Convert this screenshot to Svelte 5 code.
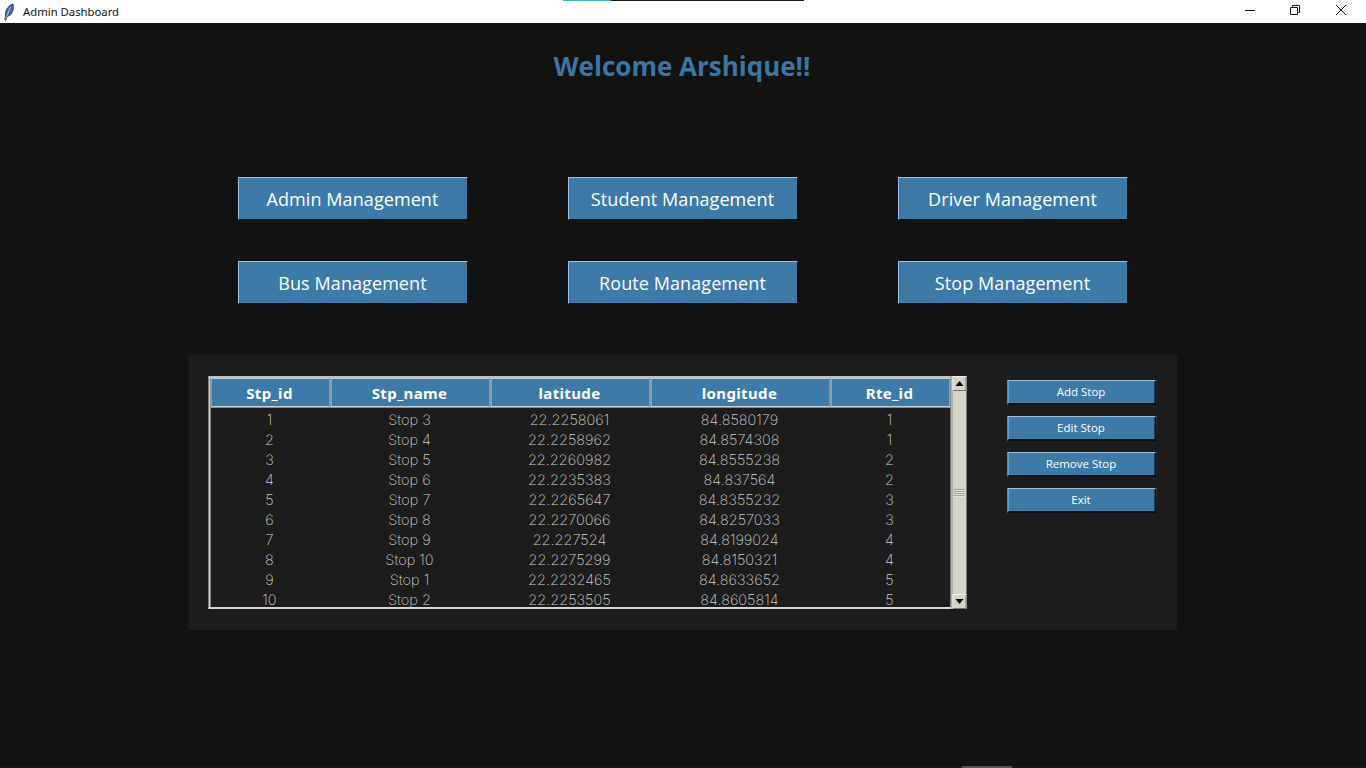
<script>
  const modules = [
    'Admin Management',
    'Student Management',
    'Driver Management',
    'Bus Management',
    'Route Management',
    'Stop Management'
  ];

  const columns = ['Stp_id', 'Stp_name', 'latitude', 'longitude', 'Rte_id'];

  const stops = [
    [1, 'Stop 3', '22.2258061', '84.8580179', 1],
    [2, 'Stop 4', '22.2258962', '84.8574308', 1],
    [3, 'Stop 5', '22.2260982', '84.8555238', 2],
    [4, 'Stop 6', '22.2235383', '84.837564', 2],
    [5, 'Stop 7', '22.2265647', '84.8355232', 3],
    [6, 'Stop 8', '22.2270066', '84.8257033', 3],
    [7, 'Stop 9', '22.227524', '84.8199024', 4],
    [8, 'Stop 10', '22.2275299', '84.8150321', 4],
    [9, 'Stop 1', '22.2232465', '84.8633652', 5],
    [10, 'Stop 2', '22.2253505', '84.8605814', 5]
  ];

  const actions = ['Add Stop', 'Edit Stop', 'Remove Stop', 'Exit'];
</script>

<div class="window">
  <header class="titlebar">
    <svg class="feather" width="12" height="18" viewBox="0 0 12 18" aria-hidden="true">
      <path d="M2 17 L2.5 11 C3 6 6 2 10 1 C11 5 10 10 7 12 L4 14 L3 17 Z" fill="#4a6a9c" stroke="#1f2a44" stroke-width="0.8" />
      <path d="M2.6 16 L7.5 4" stroke="#c8d4e8" stroke-width="0.8" fill="none" />
    </svg>
    <span class="window-title">Admin Dashboard</span>
    <div class="window-controls">
      <svg width="46" height="23" viewBox="0 0 46 23" aria-hidden="true">
        <path d="M19 10.5 H29" stroke="#111" fill="none" />
      </svg>
      <svg width="46" height="23" viewBox="0 0 46 23" aria-hidden="true">
        <path d="M18.5 7.5 H25.5 V14.5 H18.5 Z M20.5 7.5 V5.5 H27.5 V12.5 H25.5" stroke="#111" fill="none" />
      </svg>
      <svg width="46" height="23" viewBox="0 0 46 23" aria-hidden="true">
        <path d="M18 5 L28 15 M28 5 L18 15" stroke="#111" fill="none" />
      </svg>
    </div>
  </header>

  <main class="content">
    <h1>Welcome Arshique!!</h1>

    <nav class="modules">
      {#each modules as label}
        <button class="raised module">{label}</button>
      {/each}
    </nav>

    <section class="panel">
      <div class="table-wrap">
        <div class="table-frame">
          <div class="head">
            {#each columns as col}
              <div class="head-cell">{col}</div>
            {/each}
          </div>
          <div class="rows">
            {#each stops as row}
              <div class="row">
                {#each row as value}
                  <div>{value}</div>
                {/each}
              </div>
            {/each}
          </div>
        </div>
        <div class="scrollbar">
          <div class="arrow"><span class="tri up"></span></div>
          <div class="track">
            <div class="grip"></div>
          </div>
          <div class="arrow"><span class="tri down"></span></div>
        </div>
      </div>

      <div class="actions">
        {#each actions as label}
          <button class="raised action">{label}</button>
        {/each}
      </div>
    </section>
  </main>

  <div class="taskbar-top"></div>
  <div class="taskbar-bottom"></div>
</div>

<style>
  :global(body) {
    margin: 0;
    background: #121212;
  }

  .window {
    width: 1366px;
    height: 768px;
    overflow: hidden;
    position: relative;
    display: flex;
    flex-direction: column;
    background: #121212;
    font-family: "Open Sans", "Noto Sans", sans-serif;
  }

  .titlebar {
    height: 23px;
    flex: none;
    display: flex;
    align-items: center;
    background: #fff;
    color: #111;
    font-family: "Noto Sans", sans-serif;
    font-size: 11.3px;
  }

  .feather {
    margin: 0 8px 0 3px;
  }

  .window-controls {
    display: flex;
    margin-left: auto;
    margin-right: 2px;
  }

  .window-controls svg {
    display: block;
  }

  .content {
    flex: 1;
    display: flex;
    flex-direction: column;
    align-items: center;
  }

  h1 {
    margin: 23px 0 0;
    height: 40px;
    line-height: 40px;
    font-size: 26px;
    font-weight: 700;
    color: #3877a6;
    white-space: nowrap;
    transform: translateX(-1px);
  }

  .modules {
    margin-top: 91px;
    display: grid;
    grid-template-columns: repeat(3, 230px);
    grid-auto-rows: 43px;
    column-gap: 100px;
    row-gap: 41px;
  }

  .raised {
    box-sizing: border-box;
    margin: 0;
    padding: 0;
    background: #3d7aa8;
    color: #fff;
    font-family: "Open Sans", "Noto Sans", sans-serif;
    border: 1px solid;
    border-color: #9cc0de #0a0f14 #0a0f14 #9cc0de;
    border-radius: 0;
  }

  .module {
    font-size: 18px;
    letter-spacing: 0.08px;
    padding-right: 1px;
  }

  .panel {
    box-sizing: border-box;
    width: 989px;
    height: 275px;
    margin-top: 51px;
    transform: translateX(-0.5px);
    padding: 21px 20px;
    display: flex;
    align-items: flex-start;
    background: #1c1c1c;
  }

  .table-wrap {
    display: flex;
    height: 233px;
  }

  .table-frame {
    box-sizing: border-box;
    width: 744px;
    height: 233px;
    border: 2px solid;
    border-color: #c0c0bc #d8d8d0 #d8d8d0 #d8d8d0;
    overflow: hidden;
    background: #1c1c1c;
  }

  .head,
  .row {
    display: grid;
    grid-template-columns: 120px 160px 160px 180px 120px;
  }

  .head {
    height: 29px;
    border-bottom: 1px solid #999;
    box-sizing: content-box;
  }

  .head-cell {
    box-sizing: border-box;
    height: 29px;
    display: flex;
    align-items: center;
    justify-content: center;
    padding-right: 1px;
    background: #3d7aa8;
    border: 1px solid #c4d0d8;
    outline: 1px solid #8a8a8a;
    outline-offset: 0;
    color: #fff;
    font-size: 15px;
    font-weight: 700;
    letter-spacing: 0.35px;
    font-family: "Noto Sans", sans-serif;
  }

  .rows {
    padding-top: 2px;
  }

  .row {
    height: 20px;
    line-height: 20px;
    text-align: center;
    color: #d0d0d0;
    font-size: 14.5px;
    font-weight: 200;
    font-family: "Inter", sans-serif;
  }

  .row > div {
    padding-right: 1px;
  }

  .scrollbar {
    width: 15px;
    height: 233px;
    display: flex;
    flex-direction: column;
    background: #d6d3cb;
    border-left: 1px solid #888;
    box-sizing: border-box;
    margin-left: -1px;
  }

  .arrow {
    height: 15px;
    flex: none;
    display: flex;
    align-items: center;
    justify-content: center;
    box-sizing: border-box;
    border: 1px solid;
    border-color: #f0eee8 #77756f #77756f #f0eee8;
    background: #d6d3cb;
  }

  .tri {
    width: 0;
    height: 0;
    border-left: 4px solid transparent;
    border-right: 4px solid transparent;
  }

  .tri.up {
    border-bottom: 5px solid #000;
  }

  .tri.down {
    border-top: 5px solid #000;
  }

  .track {
    flex: 1;
    display: flex;
    align-items: center;
    justify-content: center;
  }

  .grip {
    width: 11px;
    height: 8px;
    background: repeating-linear-gradient(to bottom, #a09e98 0 1px, #e8e6e0 1px 2px);
  }

  .actions {
    margin-left: 41px;
    margin-top: 4px;
    display: flex;
    flex-direction: column;
    gap: 11px;
  }

  .action {
    width: 149px;
    height: 25px;
    padding-bottom: 1px;
    font-size: 11.5px;
    border-bottom-width: 2px;
    border-right-width: 2px;
  }

  .taskbar-top {
    position: absolute;
    top: 0;
    left: 563px;
    width: 241px;
    height: 1px;
    background: linear-gradient(to right, #35b6c9 0 48px, #1a1a1a 48px);
  }

  .taskbar-bottom {
    position: absolute;
    bottom: 0;
    left: 0;
    width: 100%;
    height: 2px;
    background: linear-gradient(to right, #1a1a1a 962px, #555 962px 1012px, #1a1a1a 1012px);
  }
</style>
